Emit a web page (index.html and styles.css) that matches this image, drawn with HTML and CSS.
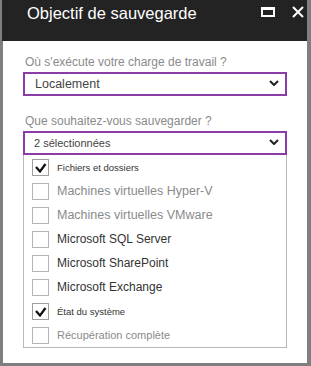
FILE: index.html
```html
<!DOCTYPE html>
<html lang="fr">
<head>
    <meta charset="UTF-8">
    <meta name="viewport" content="width=device-width, initial-scale=1.0">
    <title>Objectif de sauvegarde</title>
    <link rel="stylesheet" href="styles.css">
</head>
<body>
    <div class="panel">
        <div class="header">
            <h1 class="title">Objectif de sauvegarde</h1>
            <div class="actions">
                <span class="maximize"></span>
                <svg class="close" width="12" height="12" viewBox="0 0 12 12">
                    <path d="M1 1 L11 11 M11 1 L1 11" stroke="#fff" stroke-width="2" fill="none"/>
                </svg>
            </div>
        </div>
        <div class="content">
            <label class="field-label">Où s'exécute votre charge de travail ?</label>
            <div class="dropdown">
                <span class="value">Localement</span>
                <svg class="chevron" width="10" height="6" viewBox="0 0 10 6">
                    <polyline points="1,1 5,5 9,1" stroke="#222" stroke-width="2" fill="none"/>
                </svg>
            </div>

            <label class="field-label second">Que souhaitez-vous sauvegarder ?</label>
            <div class="dropdown">
                <span class="value small">2 sélectionnées</span>
                <svg class="chevron" width="10" height="6" viewBox="0 0 10 6">
                    <polyline points="1,1 5,5 9,1" stroke="#222" stroke-width="2" fill="none"/>
                </svg>
            </div>
            <ul class="options">
                <li class="option">
                    <span class="box checked">
                        <svg width="17" height="17" viewBox="0 0 17 17">
                            <polyline points="4,8 8,12.5 13.5,5" stroke="#111" stroke-width="2.3" fill="none"/>
                        </svg>
                    </span>
                    <span class="text tiny">Fichiers et dossiers</span>
                </li>
                <li class="option">
                    <span class="box"></span>
                    <span class="text muted">Machines virtuelles Hyper-V</span>
                </li>
                <li class="option">
                    <span class="box"></span>
                    <span class="text muted">Machines virtuelles VMware</span>
                </li>
                <li class="option">
                    <span class="box"></span>
                    <span class="text">Microsoft SQL Server</span>
                </li>
                <li class="option">
                    <span class="box"></span>
                    <span class="text">Microsoft SharePoint</span>
                </li>
                <li class="option">
                    <span class="box"></span>
                    <span class="text">Microsoft Exchange</span>
                </li>
                <li class="option">
                    <span class="box checked">
                        <svg width="17" height="17" viewBox="0 0 17 17">
                            <polyline points="4,8 8,12.5 13.5,5" stroke="#111" stroke-width="2.3" fill="none"/>
                        </svg>
                    </span>
                    <span class="text tiny">État du système</span>
                </li>
                <li class="option">
                    <span class="box"></span>
                    <span class="text muted last">Récupération complète</span>
                </li>
            </ul>
        </div>
    </div>
</body>
</html>
```

FILE: styles.css
```css
/* general styling */
* {
box-sizing: border-box;
margin: 0;
padding: 0;
}

html, body {
height: 100%;
}

body {
background-color: #7f7f7f;
font-family: "Liberation Sans", Arial, sans-serif;
}

.panel {
display: flex;
flex-direction: column;
height: 363px;
margin: 0 4px 0 2px;
}

/* header bar */
.header {
align-items: flex-start;
background-color: #232323;
display: flex;
height: 41px;
justify-content: space-between;
padding: 3px 0 0 25px;
}

.title {
color: #fff;
font-size: 16.5px;
font-weight: normal;
line-height: 20px;
}

.actions {
align-items: center;
display: flex;
gap: 17px;
margin-top: 3px;
padding-right: 3px;
}

.maximize {
border: 2px solid #fff;
border-top-width: 3px;
display: block;
height: 10px;
width: 14px;
}

.close {
display: block;
}

/* body */
.content {
background-color: #fff;
border-left: 1px solid #7f7f7f;
flex: 1;
padding: 14px 20px 0 20px;
}

.field-label {
color: #8a8a8a;
display: block;
font-size: 12px;
line-height: 14px;
padding-left: 2px;
}

.field-label.second {
margin-top: 18px;
}

.dropdown {
align-items: center;
border: 2px solid #8b3ca6;
display: flex;
height: 24px;
justify-content: space-between;
margin-top: 3px;
padding: 0 6px 0 10px;
}

.value {
color: #444;
font-size: 12.5px;
line-height: 20px;
}

.value.small {
font-size: 11px;
margin-left: -1px;
}

.chevron {
display: block;
margin-top: -2px;
}

/* checkbox list */
.options {
border: 1px solid #b8b8b8;
border-top: none;
list-style-type: none;
padding-left: 8px;
}

.option {
align-items: center;
display: flex;
gap: 8px;
height: 24px;
}

.box {
border: 1px solid #b4b4b4;
display: block;
flex: none;
height: 17px;
width: 17px;
}

.box.checked {
border-color: #a0a0a0;
}

.box svg {
display: block;
margin: -1px;
}

.text {
color: #333;
font-size: 12px;
}

.text.muted {
color: #8a8a8a;
font-size: 12.5px;
}

.text.muted.last {
font-size: 11px;
}

.text.tiny {
font-size: 9.5px;
}
```
